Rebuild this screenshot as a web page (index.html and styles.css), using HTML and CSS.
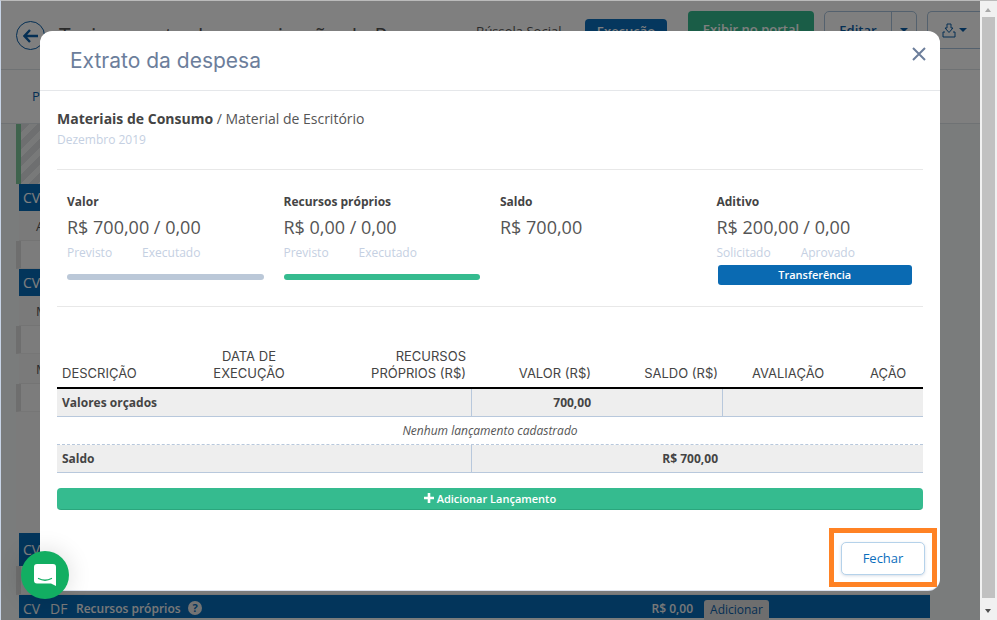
FILE: index.html
```html
<!DOCTYPE html>
<html lang="pt-BR">
<head>
<meta charset="utf-8">
<title>Extrato da despesa</title>
<link rel="stylesheet" href="styles.css">
</head>
<body>
<div class="app">
  <div class="main">
    <header class="top">
      <span class="back"><svg width="16" height="14" viewBox="0 0 16 14"><path d="M7 1 1.5 7 7 13M2 7h13" fill="none" stroke="#0a5ea8" stroke-width="2.4"/></svg></span>
      <h1 class="page-title">Treinamento de organização de P</h1>
      <span class="program">Bússola Social</span>
      <span class="badge">Execução</span>
      <span class="btn-portal">Exibir no portal</span>
      <span class="btn-edit"><span class="edit-label">Editar</span><span class="edit-caret"><i class="caret"></i></span></span>
      <span class="btn-export">
        <svg width="14" height="15" viewBox="0 0 14 15"><path d="M5 1h4v4h2L7 9.500 3 5h2zM3 9H1v5h12V9h-2" fill="none" stroke="#0a5ea8" stroke-width="1"/></svg>
        <i class="caret"></i>
      </span>
    </header>
    <nav class="tabs"><span>P</span></nav>
    <section class="content">
      <div class="row hatch"></div>
      <div class="row cv">CV</div>
      <div class="row sub">A</div>
      <div class="row strip"></div>
      <div class="row cv">CV</div>
      <div class="row sub">M</div>
      <div class="row strip"></div>
      <div class="row sub">M</div>
      <div class="row strip"></div>
      <div class="row filler"></div>
      <div class="row cv tall">CV</div>
      <div class="row strip last"></div>
      <div class="row total">
        <span class="total-cv">CV</span>
        <span class="total-df">DF</span>
        <span class="total-name">Recursos próprios</span>
        <span class="help">?</span>
        <span class="total-value">R$ 0,00</span>
        <span class="total-add">Adicionar</span>
      </div>
    </section>
  </div>
  <aside class="scrollbar">
    <i class="arrow-up"></i>
    <span class="thumb"></span>
    <i class="arrow-down"></i>
  </aside>
  <div class="overlay"></div>

  <div class="modal">
    <div class="modal-head">
      <h2 class="modal-title">Extrato da despesa</h2>
      <svg class="close" width="14" height="14" viewBox="0 0 14 14"><path d="M1 1l12 12M13 1 1 13" fill="none" stroke="#6c7e9b" stroke-width="2"/></svg>
    </div>
    <div class="modal-body">
      <p class="crumb"><strong>Materiais de Consumo</strong> / Material de Escritório</p>
      <p class="period">Dezembro 2019</p>
      <div class="stats">
        <div class="stat">
          <div class="stat-label">Valor</div>
          <div class="stat-value">R$ 700,00 / 0,00</div>
          <div class="stat-notes"><span>Previsto</span><span>Executado</span></div>
          <div class="bar bar-gray"></div>
        </div>
        <div class="stat">
          <div class="stat-label">Recursos próprios</div>
          <div class="stat-value">R$ 0,00 / 0,00</div>
          <div class="stat-notes"><span>Previsto</span><span>Executado</span></div>
          <div class="bar bar-green"></div>
        </div>
        <div class="stat">
          <div class="stat-label">Saldo</div>
          <div class="stat-value">R$ 700,00</div>
        </div>
        <div class="stat">
          <div class="stat-label">Aditivo</div>
          <div class="stat-value">R$ 200,00 / 0,00</div>
          <div class="stat-notes"><span>Solicitado</span><span>Aprovado</span></div>
          <div class="transfer">Transferência</div>
        </div>
      </div>
      <table class="ledger">
        <colgroup>
          <col class="c1"><col class="c2"><col class="c3"><col class="c4"><col class="c5"><col class="c6"><col class="c7">
        </colgroup>
        <thead>
          <tr>
            <th class="left">DESCRIÇÃO</th>
            <th class="center">DATA DE<br>EXECUÇÃO</th>
            <th class="right">RECURSOS<br>PRÓPRIOS (R$)</th>
            <th class="right">VALOR (R$)</th>
            <th class="right tight">SALDO (R$)</th>
            <th class="center">AVALIAÇÃO</th>
            <th class="center">AÇÃO</th>
          </tr>
        </thead>
        <tbody>
          <tr class="shade">
            <td colspan="3" class="sep">Valores orçados</td>
            <td class="right">700,00</td>
            <td class="sep"></td>
            <td colspan="2"></td>
          </tr>
          <tr class="empty">
            <td colspan="7">Nenhum lançamento cadastrado</td>
          </tr>
          <tr class="shade balance">
            <td colspan="3" class="sep">Saldo</td>
            <td colspan="2" class="right tight">R$ 700,00</td>
            <td colspan="2"></td>
          </tr>
        </tbody>
      </table>
      <div class="add-entry">
        <svg width="10" height="10" viewBox="0 0 10 10"><path d="M5 0v10M0 5h10" stroke="#fff" stroke-width="2.600"/></svg>
        Adicionar Lançamento
      </div>
    </div>
    <div class="modal-foot">
      <div class="highlight"><span class="btn-close">Fechar</span></div>
    </div>
  </div>

  <div class="chat">
    <svg width="24" height="24" viewBox="0 0 24 24">
      <path d="M4 1h16a3 3 0 0 1 3 3v19l-5-2.500H4a3 3 0 0 1-3-3V4a3 3 0 0 1 3-3z" fill="#fff"/>
      <path d="M5.500 15.500q6.500 3.500 13 0" fill="none" stroke="#12ae62" stroke-width="1.300" stroke-linecap="round"/>
    </svg>
  </div>
</div>
</body>
</html>
```
FILE: styles.css
```css
* { box-sizing: border-box; }
html, body { margin: 0; height: 100%; overflow: hidden; }
body { font-family: "Open Sans", sans-serif; color: #444; background: #fff; }
p, h1, h2 { margin: 0; font-weight: 400; }
i { display: block; }

.app { position: relative; display: flex; width: 997px; height: 620px; overflow: hidden; border-top: 1px solid #bbb; border-left: 1px solid #c8d4e6; }
.main { width: 979px; flex: none; background: #f5f8f8; }

.top { position: relative; height: 69px; background: #fff; border-bottom: 1px solid #dfe5e8; display: flex; align-items: flex-start; padding: 10px 0 0 15px; }
.back { width: 29px; height: 29px; margin-top: 10px; border: 1px solid #0a5ea8; border-radius: 50%; display: flex; align-items: center; justify-content: center; flex: none; }
.page-title { font-size: 21px; line-height: 22px; margin: 14px 0 0 14px; width: 417px; white-space: nowrap; color: #555; flex: none; }
.program { font-size: 13px; line-height: 18px; margin-top: 11px; width: 109px; flex: none; color: #555; }
.badge { width: 82px; height: 26px; margin-top: 8px; border-radius: 4px; background: #0a6ebd; color: #fff; font-size: 13px; font-weight: 600; line-height: 24px; text-align: center; flex: none; }
.btn-portal { width: 126px; height: 38px; margin-left: 21px; border-radius: 4px; background: #35bb8f; color: #fff; font-size: 13px; font-weight: 600; line-height: 36px; text-align: center; flex: none; }
.btn-edit { display: flex; width: 93px; height: 38px; margin-left: 10px; border: 1px solid #a9c3dc; border-radius: 5px; color: #0a5ea8; font-size: 13px; font-weight: 600; line-height: 36px; flex: none; }
.edit-label { width: 67px; text-align: center; border-right: 1px solid #a9c3dc; }
.edit-caret { flex: 1; display: flex; align-items: center; justify-content: center; }
.btn-export { display: flex; align-items: center; gap: 3px; width: 53px; height: 38px; margin-left: 10px; padding-left: 14px; border: 1px solid #a9c3dc; border-radius: 5px 0 0 5px; border-right: 0; flex: none; }
.caret { width: 0; height: 0; border-left: 4px solid transparent; border-right: 4px solid transparent; border-top: 4px solid #0a5ea8; }

.tabs { height: 54px; background: #fff; border-bottom: 1px solid #dfe5e8; padding: 17px 0 0 31px; font-size: 13px; line-height: 18px; color: #0a5ea8; }

.content { width: 929px; padding-left: 15px; }
.row { font-size: 13px; }
.hatch { height: 60px; border-left: 5px solid #7fc79a; background: repeating-linear-gradient(135deg, #dcdfe0 0 6px, #f1f3f3 6px 12px); }
.cv { height: 27px; margin-left: 3px; background: #076bb6; color: #fff; padding-left: 4px; line-height: 27px; font-size: 14px; }
.cv.tall { height: 33px; line-height: 33px; }
.sub { height: 30px; margin-left: 3px; padding-left: 17px; line-height: 30px; background: #f5f5f5; border-bottom: 1px solid #e8e8e8; white-space: nowrap; overflow: hidden; color: #555; }
.strip { height: 28px; border-left: 5px solid #dcdcdc; background: #f8f8f8; border-bottom: 1px solid #ededed; }
.strip.last { height: 29px; }
.filler { height: 121px; background: #f6f6f6; }
.total { display: flex; align-items: center; height: 23px; margin-left: 3px; background: #076bb6; color: #f2f2f2; font-weight: 600; padding-top: 3px; white-space: nowrap; }
.total-cv { width: 31px; padding-left: 4px; font-weight: 400; font-size: 14px; }
.total-df { width: 26px; font-weight: 400; font-size: 14px; }
.total-name { font-size: 12px; width: 112px; }
.help { width: 14px; height: 14px; border-radius: 50%; background: #e6e6e6; color: #076bb6; font-size: 11px; font-weight: 700; line-height: 14px; text-align: center; }
.total-value { width: 491px; text-align: right; font-size: 12px; }
.total-add { width: 65px; height: 20px; margin-left: 11px; margin-top: 3px; border-radius: 3px 3px 0 0; background: #dcdcdc; color: #0a5ea8; font-weight: 400; font-size: 12px; line-height: 20px; text-align: center; }

.scrollbar { position: relative; z-index: 3; width: 17px; flex: none; background: #f1f1f1; padding: 17px 2px 20px 1px; margin-top: -1px; }
.thumb { display: block; width: 13px; height: 581px; background: #c1c1c1; margin-left: 1px; }
.arrow-up, .arrow-down { position: absolute; left: 5px; width: 0; height: 0; border-left: 3.500px solid transparent; border-right: 3.500px solid transparent; }
.arrow-up { top: 8px; border-bottom: 4px solid #a8a8a8; }
.arrow-down { bottom: 7px; border-top: 4px solid #505050; }

.overlay { position: absolute; z-index: 1; top: -1px; left: -1px; width: 980px; height: 620px; background: rgba(0, 0, 0, .5); }

.modal { position: absolute; z-index: 2; left: 39px; top: 30px; width: 900px; height: 559px; background: #fff; border-radius: 12px; box-shadow: 0 1px 0 #dde3ef; display: flex; flex-direction: column; }
.modal-head { position: relative; height: 60px; flex: none; border-bottom: 1px solid #e5e7ea; padding: 17px 0 0 30px; }
.modal-title { font-family: Inter, sans-serif; font-size: 21px; line-height: 26px; color: #6c7e9b; }
.close { position: absolute; right: 14px; top: 16px; }

.modal-body { padding: 18px 17px 0; flex: none; }
.crumb { font-size: 14px; line-height: 20px; color: #555; }
.crumb strong { font-weight: 700; color: #444; }
.period { font-size: 12px; line-height: 18px; margin-top: 2px; color: #c5d0e2; }

.stats { display: grid; grid-template-columns: repeat(4, 1fr); height: 138px; margin-top: 20px; padding-top: 23px; border-top: 1px solid #e8e8e8; border-bottom: 1px solid #e8e8e8; }
.stat { padding: 0 10px; }
.stat-label { font-size: 12px; font-weight: 700; line-height: 18px; color: #444; }
.stat-value { font-size: 18px; line-height: 26px; margin-top: 3px; color: #555; }
.stat-notes { display: flex; gap: 30px; font-size: 12px; line-height: 18px; margin-top: 4px; color: #c5d0e2; }
.bar { height: 6px; margin-top: 12px; border-radius: 3px; }
.bar-gray { background: #bbc8d8; }
.bar-green { background: #35bb8f; }
.transfer { height: 20px; margin: 3px 1px 0; border-radius: 3px; background: #0a6ab2; color: #fff; font-size: 11px; font-weight: 600; line-height: 20px; text-align: center; }

.ledger { width: 866px; margin-top: 41px; table-layout: fixed; border-collapse: separate; border-spacing: 0; }
.c1 { width: 126px; } .c2 { width: 132px; } .c3 { width: 157px; } .c4 { width: 125px; } .c5 { width: 126px; } .c6 { width: 130px; } .c7 { width: 70px; }
.ledger th { font-family: Inter, sans-serif; font-size: 13px; font-weight: 400; line-height: 17px; padding: 0 5px 5px; vertical-align: bottom; color: #444; border-bottom: 2px solid #000; }
.ledger .left { text-align: left; }
.ledger .center { text-align: center; }
.ledger .right { text-align: right; padding-right: 6px; }
.ledger .tight { padding-right: 5px; }
.ledger td { font-size: 12px; padding: 0 5px; height: 28px; line-height: 16px; }
.shade td { background: #eee; font-weight: 700; color: #444; border-bottom: 1px solid #b8c8dc; }
.shade .sep { border-right: 1px solid #b8c8dc; }
.empty td { text-align: center; font-style: italic; color: #555; border-bottom: 1px dashed #b8c8dc; }

.add-entry { height: 22px; margin-top: 15px; border-radius: 4px; background: #35bb8f; border-bottom: 1px solid #2ba67d; color: #fff; font-size: 11px; font-weight: 600; line-height: 21px; text-align: center; }

.modal-foot { display: flex; justify-content: flex-end; padding: 18px 3px 0 0; }
.highlight { padding: 9px 7px 7px; border: 5px solid #ff8224; }
.btn-close { display: block; width: 84px; height: 33px; border: 1px solid #b5d2ea; border-radius: 5px; box-shadow: 0 1px 3px rgba(90, 120, 160, .25); background: #fff; color: #0a6ebd; font-size: 13px; font-weight: 500; line-height: 31px; text-align: center; }

.chat { position: absolute; z-index: 4; left: 20px; top: 550px; width: 48px; height: 48px; border-radius: 50%; background: #12ae62; box-shadow: 0 0 24px rgba(0, 0, 0, .14); display: flex; align-items: center; justify-content: center; }
```
